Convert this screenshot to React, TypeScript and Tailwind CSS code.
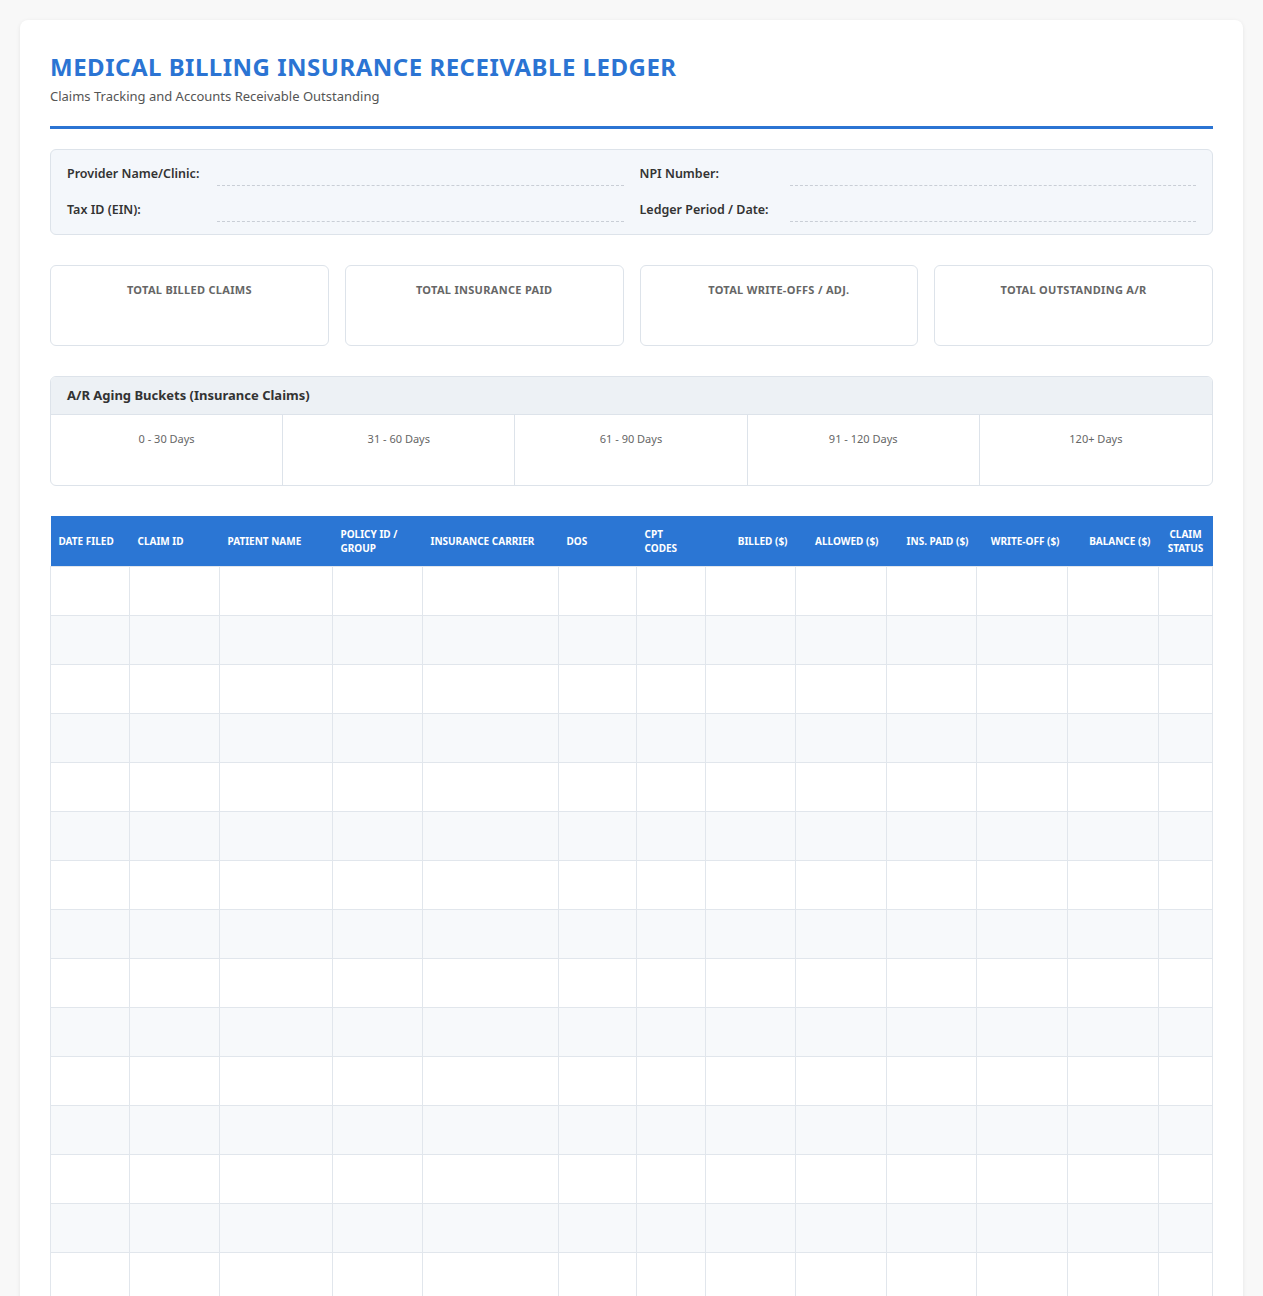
const cols = [
  { t: "DATE FILED", w: 79, a: "text-left" },
  { t: "CLAIM ID", w: 90, a: "text-left" },
  { t: "PATIENT NAME", w: 113, a: "text-left" },
  { t: "POLICY ID / GROUP", w: 90, a: "text-left" },
  { t: "INSURANCE CARRIER", w: 136, a: "text-left" },
  { t: "DOS", w: 78, a: "text-left" },
  { t: "CPT CODES", w: 69, a: "text-left" },
  { t: "BILLED ($)", w: 90, a: "text-right" },
  { t: "ALLOWED ($)", w: 91, a: "text-right" },
  { t: "INS. PAID ($)", w: 90, a: "text-right" },
  { t: "WRITE-OFF ($)", w: 91, a: "text-right" },
  { t: "BALANCE ($)", w: 91, a: "text-right" },
  { t: "CLAIM STATUS", w: 54, a: "text-center" },
];

export default function App() {
  const rows = Array.from({ length: 15 });
  return (
    <div className="min-h-screen bg-[#f8f8f8] px-5 pt-5" style={{ fontFamily: '"Noto Sans", "Open Sans", sans-serif' }}>
      <div className="bg-white rounded-lg shadow-[0_1px_4px_rgba(0,0,0,0.08)] px-[30px] pt-[30px] pb-10">
        <h1 className="text-[24px] font-bold text-[#2b74d3] tracking-[0.5px] leading-[34px]">MEDICAL BILLING INSURANCE RECEIVABLE LEDGER</h1>
        <p className="text-[13px] text-[#555] mt-[2px] leading-5">Claims Tracking and Accounts Receivable Outstanding</p>
        <div className="h-[3px] bg-[#2b74d3] mt-5" />
        <div className="mt-5 bg-[#f4f7fb] border border-[#dde3ea] rounded-md px-4 py-[14px] grid grid-cols-2 gap-x-4 gap-y-[16px]">
          {[["Provider Name/Clinic:", "NPI Number:"], ["Tax ID (EIN):", "Ledger Period / Date:"]].flat().map((l) => (
            <div key={l} className="flex items-end h-5">
              <span className="w-[150px] text-[12.5px] font-semibold text-[#333] leading-5">{l}</span>
              <div className="flex-1 border-b border-dashed border-[#c9ced6] mb-[-2px]" />
            </div>
          ))}
        </div>
        <div className="mt-[30px] grid grid-cols-4 gap-4">
          {["TOTAL BILLED CLAIMS", "TOTAL INSURANCE PAID", "TOTAL WRITE-OFFS / ADJ.", "TOTAL OUTSTANDING A/R"].map((t) => (
            <div key={t} className="h-[81px] border border-[#dde3ea] rounded-md pt-4 text-center text-[11px] font-bold text-[#666] tracking-[0.3px]">{t}</div>
          ))}
        </div>
        <div className="mt-[30px] border border-[#dde3ea] rounded-md overflow-hidden">
          <div className="bg-[#edf1f5] border-b border-[#dde3ea] px-4 h-[38px] flex items-center text-[13px] font-bold text-[#333]">A/R Aging Buckets (Insurance Claims)</div>
          <div className="grid grid-cols-5">
            {["0 - 30 Days", "31 - 60 Days", "61 - 90 Days", "91 - 120 Days", "120+ Days"].map((t, i) => (
              <div key={t} className={`h-[70px] pt-4 text-center text-[11px] text-[#666] ${i < 4 ? "border-r border-[#dde3ea]" : ""}`}>{t}</div>
            ))}
          </div>
        </div>
        <table className="mt-[30px] w-full border-collapse table-fixed">
          <colgroup>{cols.map((c) => <col key={c.t} style={{ width: c.w }} />)}</colgroup>
          <thead>
            <tr className="bg-[#2b76d4] h-[50px]">
              {cols.map((c) => (
                <th key={c.t} className={`px-2 text-[10px] font-bold text-white leading-[14px] ${c.a}`}>{c.t}</th>
              ))}
            </tr>
          </thead>
          <tbody>
            {rows.map((_, i) => (
              <tr key={i} className={`h-[49px] ${i % 2 ? "bg-[#f7f9fb]" : "bg-white"}`}>
                {cols.map((c) => <td key={c.t} className="border border-[#e1e6ec]" />)}
              </tr>
            ))}
          </tbody>
        </table>
      </div>
    </div>
  );
}
